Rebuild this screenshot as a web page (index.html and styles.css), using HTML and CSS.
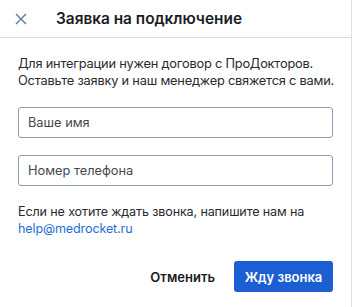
FILE: index.html
```html
<!DOCTYPE html>
<html lang="ru">
<head>
  <meta charset="UTF-8" />
  <title>Заявка на подключение</title>
  <link rel="stylesheet" href="styles.css">
</head>
<body>
  <div class="modal">
    <header class="modal-head">
      <button class="close" aria-label="Закрыть">
        <svg width="12" height="12" viewBox="0 0 12 12"><path d="M1 1L11 11M11 1L1 11" stroke="#5f7896" stroke-width="1.4" fill="none"/></svg>
      </button>
      <h1>Заявка на подключение</h1>
    </header>

    <div class="modal-body">
      <p class="intro">Для интеграции нужен договор с ПроДокторов.<br>Оставьте заявку и наш менеджер свяжется с вами.</p>
      <input class="field" type="text" placeholder="Ваше имя">
      <input class="field" type="tel" placeholder="Номер телефона">
      <p class="note">Если не хотите ждать звонка, напишите нам на <a href="#">help@medrocket.ru</a></p>
    </div>

    <div class="modal-foot">
      <button class="btn btn-text">Отменить</button>
      <button class="btn btn-primary">Жду звонка</button>
    </div>
  </div>
</body>
</html>
```

FILE: styles.css
```css
body {
  margin: 0;
  font-family: Inter, "Noto Sans", sans-serif;
  background: #fff;
  color: #1d1d1f;
}

.modal {
  width: 352px;
  height: 307px;
  border-right: 1px solid #dcdee6;
  box-sizing: border-box;
}

.modal-head {
  display: flex;
  align-items: center;
  height: 37px;
  border-bottom: 1px solid #d6d9e6;
}

.close {
  box-sizing: border-box;
  width: 56px;
  height: 32px;
  padding: 0 0 0 15px;
  border: 0;
  background: none;
  display: flex;
  align-items: center;
}

.modal-head h1 {
  margin: 0;
  font-size: 15.4px;
  font-weight: 600;
  color: #1b1b1f;
}

.modal-body {
  padding: 17px 18px 0;
}

.intro {
  margin: 0 -8px 18px 0;
  font-size: 12.8px;
  line-height: 17px;
  letter-spacing: -0.2px;
  white-space: nowrap;
  color: #2a2a2e;
}

.field {
  display: block;
  width: 100%;
  height: 31px;
  box-sizing: border-box;
  margin-bottom: 17px;
  padding: 0 9px;
  border: 1px solid #8e9db2;
  border-radius: 3px;
  font-family: inherit;
  font-size: 12.8px;
  color: #2a2a2e;
}

.field::placeholder {
  color: #45474d;
}

.note {
  margin: 0;
  font-size: 12.6px;
  line-height: 17px;
  letter-spacing: -0.15px;
  color: #2a2a2e;
}

.note a {
  color: #1f6fd6;
  text-decoration: none;
}

.modal-foot {
  display: flex;
  justify-content: flex-end;
  align-items: center;
  gap: 7px;
  padding: 24px 18px 0;
}

.btn {
  height: 31px;
  border: 0;
  border-radius: 3px;
  font-family: inherit;
  font-size: 13px;
  font-weight: 600;
  padding: 0 12px;
  white-space: nowrap;
}

.btn-text {
  background: none;
  color: #1b1b1f;
}

.btn-primary {
  width: 99px;
  padding: 0;
  background: #1c5fd2;
  color: #fff;
}
```
